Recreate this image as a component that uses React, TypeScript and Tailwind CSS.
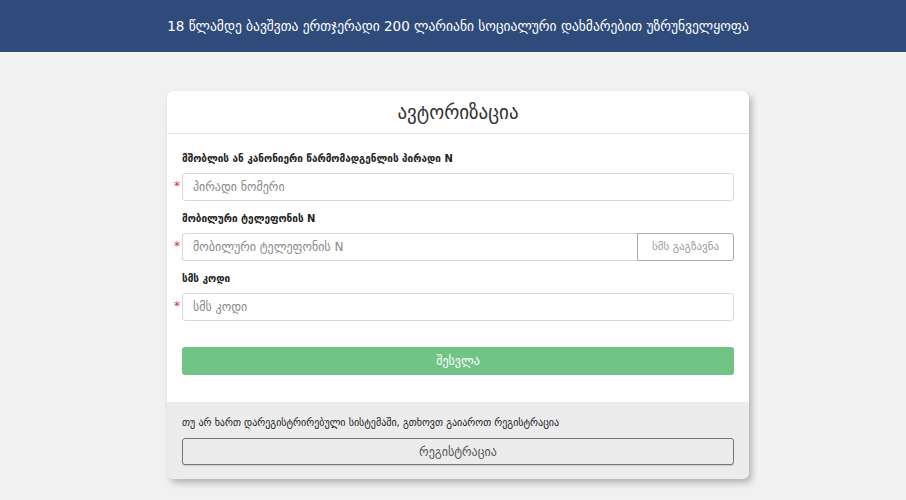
import React from "react";

const font = { fontFamily: '"DejaVu Sans", "Noto Sans", sans-serif' };

function Field({ label, placeholder, button }: { label: string; placeholder: string; button?: string }) {
  return (
    <div className="mb-[11px]">
      <div className="h-[14px] text-[10px] leading-[14px] font-bold text-[#222] mb-[7px]">{label}</div>
      <div className="relative flex h-[28px]">
        <span className="absolute left-[-8px] top-[7px] text-[12px] leading-[12px] text-[#d9302c]">*</span>
        <div className={`flex-1 border border-[#d9d9d9] bg-white flex items-center pl-[10px] text-[12px] text-[#8a8a8a] ${button ? "rounded-l-[3px] border-r-0" : "rounded-[3px]"}`}>
          {placeholder}
        </div>
        {button && (
          <div className="w-[97px] border border-[#aaa] rounded-r-[3px] bg-white flex items-center justify-center text-[11px] text-[#999]">
            {button}
          </div>
        )}
      </div>
    </div>
  );
}

export default function App() {
  return (
    <div className="min-h-[500px] bg-[#f1f1f1]" style={font}>
      <div className="h-[52px] bg-[#2e4b7b] flex items-center justify-center pl-[10px] text-white text-[13.5px]">
        18 წლამდე ბავშვთა ერთჯერადი 200 ლარიანი სოციალური დახმარებით უზრუნველყოფა
      </div>
      <div className="flex justify-center pt-[39px] pl-[10px]">
        <div className="w-[582px] bg-white rounded-[7px] shadow-[3px_4px_6px_rgba(0,0,0,0.25)] overflow-hidden">
          <div className="h-[43px] border-b border-[#e6e6e6] flex items-center justify-center text-[19px] text-[#333]">
            ავტორიზაცია
          </div>
          <div className="px-[15px] pt-[18px] pb-[27px]">
            <Field label="მშობლის ან კანონიერი წარმომადგენლის პირადი N" placeholder="პირადი ნომერი" />
            <Field label="მობილური ტელეფონის N" placeholder="მობილური ტელეფონის N" button="სმს გაგზავნა" />
            <Field label="სმს კოდი" placeholder="სმს კოდი" />
            <div className="mt-[26px] h-[28px] rounded-[3px] bg-[#72c486] flex items-center justify-center text-white text-[12px]">
              შესვლა
            </div>
          </div>
          <div className="bg-[#ececec] px-[15px] pt-[14px] pb-[14px]">
            <div className="h-[14px] text-[10px] leading-[14px] text-[#222] mb-[8px]">
              თუ არ ხართ დარეგისტრირებული სისტემაში, გთხოვთ გაიაროთ რეგისტრაცია
            </div>
            <div className="h-[27px] border border-[#777] rounded-[3px] bg-[#ececec] shadow-[0_1px_1px_rgba(0,0,0,0.15)] flex items-center justify-center text-[12px] text-[#555]">
              რეგისტრაცია
            </div>
          </div>
        </div>
      </div>
    </div>
  );
}
